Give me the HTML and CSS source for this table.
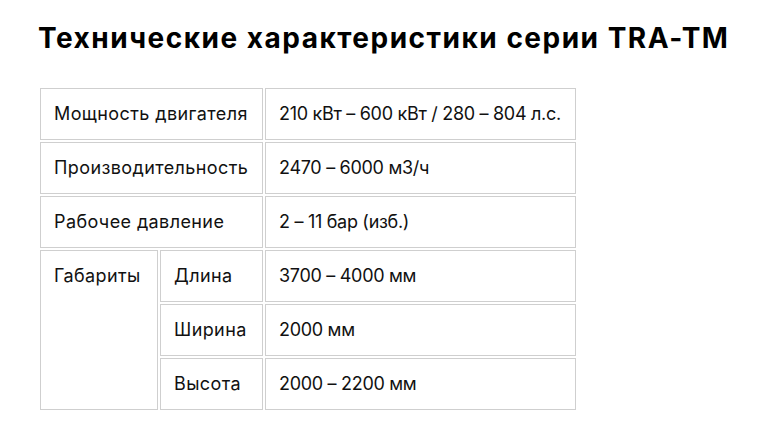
FILE: index.html
```html
<!DOCTYPE html>
<html lang="ru">
<head>
<meta charset="utf-8">
<link rel="stylesheet" href="styles.css">
</head>
<body>
<main class="page">
  <h1 class="title">Технические характеристики серии TRA-TM</h1>
  <table class="specs">
    <tr>
      <td class="label" colspan="2">Мощность двигателя</td>
      <td class="value">210 кВт – 600 кВт / 280 – 804 л.с.</td>
    </tr>
    <tr>
      <td class="label" colspan="2">Производительность</td>
      <td class="value">2470 – 6000 м3/ч</td>
    </tr>
    <tr>
      <td class="label" colspan="2">Рабочее давление</td>
      <td class="value">2 – 11 бар (изб.)</td>
    </tr>
    <tr>
      <td class="label group" rowspan="3">Габариты</td>
      <td class="label sub">Длина</td>
      <td class="value">3700 – 4000 мм</td>
    </tr>
    <tr>
      <td class="label sub">Ширина</td>
      <td class="value">2000 мм</td>
    </tr>
    <tr>
      <td class="label sub">Высота</td>
      <td class="value">2000 – 2200 мм</td>
    </tr>
  </table>
</main>
</body>
</html>
```

FILE: styles.css
```css
html, body {
  margin: 0;
  padding: 0;
  background: #fff;
}

.page {
  padding: 21px 0 0 38px;
  font-family: Inter, "Noto Sans", sans-serif;
  color: #111;
}

.title {
  margin: 0 0 31px 0;
  font-family: Inter, "Noto Sans", sans-serif;
  font-weight: 700;
  font-size: 28px;
  line-height: 34px;
  letter-spacing: 1.5px;
  color: #000;
}

.specs {
  border-collapse: separate;
  border-spacing: 2px;
  font-size: 18px;
  line-height: 24px;
  letter-spacing: 0.4px;
}

.specs td {
  border: 1px solid #cfcfcf;
  height: 24px;
  padding: 13px 13px;
  vertical-align: middle;
  white-space: nowrap;
  font-weight: 400;
}

.specs .label {
  width: 195px;
}

.specs .group {
  width: 90px;
  vertical-align: top;
}

.specs .sub {
  width: 75px;
}

.specs .value {
  width: 283px;
  letter-spacing: -0.3px;
}
```
